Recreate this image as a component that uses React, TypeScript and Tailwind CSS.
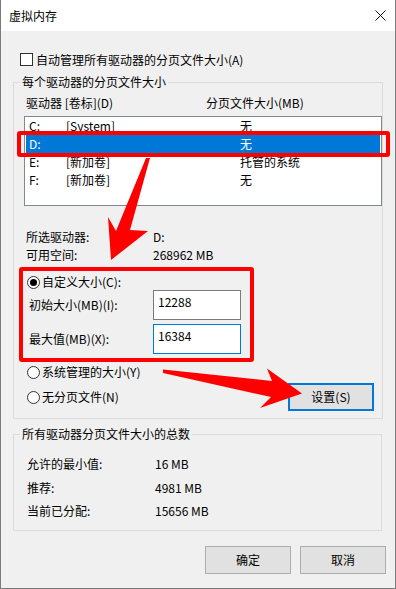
import React from 'react';

interface DriveRow {
  drive: string;
  label: string;
  size: string;
  selected?: boolean;
}

const drives: DriveRow[] = [
  { drive: 'C:', label: '[System]', size: '无' },
  { drive: 'D:', label: '', size: '无', selected: true },
  { drive: 'E:', label: '[新加卷]', size: '托管的系统' },
  { drive: 'F:', label: '[新加卷]', size: '无' },
];

const Radio = ({ checked, label }: { checked?: boolean; label: string }) => (
  <div className="flex h-[16px] items-center">
    <span className="flex h-[13px] w-[13px] items-center justify-center rounded-full border border-[#333333] bg-white">
      {checked && <span className="h-[7px] w-[7px] rounded-full bg-black" />}
    </span>
    <span className="ml-[2px]">{label}</span>
  </div>
);

const WinButton = ({ children, focused }: { children: React.ReactNode; focused?: boolean }) => (
  <button
    className={
      focused
        ? 'flex h-[28px] w-[86px] items-center justify-center border-2 border-[#0078d7] bg-[#e1e1e1]'
        : 'flex h-[28px] w-[86px] items-center justify-center border border-[#adadad] bg-[#e1e1e1]'
    }
  >
    {children}
  </button>
);

export default function App() {
  return (
    <div className="relative flex h-[589px] w-[396px] flex-col border-x border-b border-[#7a7a7a] bg-[#f0f0f0] font-['Noto_Sans_CJK_SC','Noto_Sans',sans-serif] text-[12px] leading-[16px] text-black">
      {/* title bar */}
      <div className="flex h-[31px] shrink-0 items-center justify-between bg-white pl-[8px] pr-[9px]">
        <span>虚拟内存</span>
        <svg width="11" height="11" viewBox="0 0 11 11">
          <path d="M0.5 0.5 L10.5 10.5 M10.5 0.5 L0.5 10.5" stroke="#111" strokeWidth="1" />
        </svg>
      </div>

      <div className="flex flex-1 flex-col pl-[12px] pr-[13px]">
        <div className="ml-[7px] mt-[22px] flex h-[13px] items-center">
          <span className="h-[13px] w-[13px] border border-[#333333] bg-white" />
          <span className="ml-[3px]">自动管理所有驱动器的分页文件大小(A)</span>
        </div>

        {/* per-drive group */}
        <fieldset className="mt-[8px] border border-[#dcdcdc]">
          <legend className="ml-[6px] px-[2px]">每个驱动器的分页文件大小</legend>
          <div className="flex flex-col pb-[7px] pl-[10px] pt-[5px]">
            <div className="flex h-[16px] items-center pl-[2px]">
              <span className="w-[180px]">驱动器 [卷标](D)</span>
              <span>分页文件大小(MB)</span>
            </div>

            <div className="mt-[5px] h-[90px] w-[358px] border border-[#828790] bg-white px-[1px]">
              {drives.map((d) => (
                <div
                  key={d.drive}
                  className={
                    d.selected
                      ? 'flex h-[18px] items-center bg-[#0078d7] text-white'
                      : 'flex h-[18px] items-center'
                  }
                >
                  <span className="w-[40px] pl-[3px]">{d.drive}</span>
                  <span className="w-[174px]">{d.label}</span>
                  <span>{d.size}</span>
                </div>
              ))}
            </div>

            <div className="mt-[23px] flex h-[16px] items-center pl-[2px]">
              <span className="w-[127px]">所选驱动器:</span>
              <span>D:</span>
            </div>
            <div className="mt-[2px] flex h-[16px] items-center pl-[2px]">
              <span className="w-[127px]">可用空间:</span>
              <span>268962 MB</span>
            </div>

            <div className="mt-[11px] pl-[3px]">
              <Radio checked label="自定义大小(C):" />
            </div>
            <div className="flex h-[30px] items-center pl-[5px]">
              <span className="w-[124px]">初始大小(MB)(I):</span>
              <div className="h-[30px] w-[88px] border border-[#7a7a7a] bg-white pl-[4px] pt-[3px]">12288</div>
            </div>
            <div className="mt-[4px] flex h-[30px] items-center pl-[5px]">
              <span className="w-[124px]">最大值(MB)(X):</span>
              <div className="h-[30px] w-[88px] border border-[#0078d7] bg-white pl-[4px] pt-[3px]">16384</div>
            </div>

            <div className="mt-[10px] pl-[3px]">
              <Radio label="系统管理的大小(Y)" />
            </div>
            <div className="mt-[3px] flex items-center pl-[3px]">
              <Radio label="无分页文件(N)" />
              <div className="ml-auto mr-[8px]">
                <WinButton focused>设置(S)</WinButton>
              </div>
            </div>
          </div>
        </fieldset>

        {/* totals group */}
        <fieldset className="mt-[7px] border border-[#dcdcdc]">
          <legend className="ml-[6px] px-[2px]">所有驱动器分页文件大小的总数</legend>
          <div className="flex flex-col pb-[11px] pl-[13px] pt-[14px]">
            <div className="flex h-[16px] items-center">
              <span className="w-[128px]">允许的最小值:</span>
              <span>16 MB</span>
            </div>
            <div className="mt-[8px] flex h-[16px] items-center">
              <span className="w-[128px]">推荐:</span>
              <span>4981 MB</span>
            </div>
            <div className="mt-[7px] flex h-[16px] items-center">
              <span className="w-[128px]">当前已分配:</span>
              <span>15656 MB</span>
            </div>
          </div>
        </fieldset>

        <div className="-mr-[4px] mt-[15px] flex justify-end gap-[9px]">
          <WinButton>确定</WinButton>
          <WinButton>取消</WinButton>
        </div>
      </div>

      {/* annotations */}
      <div className="pointer-events-none absolute left-[16px] top-[131px] h-[26px] w-[373px] rounded-[3px] border-4 border-[#ff0000]" />
      <div className="pointer-events-none absolute left-[18px] top-[267px] h-[95px] w-[235px] rounded-[3px] border-4 border-[#ff0000]" />
      <svg
        className="pointer-events-none absolute left-0 top-0"
        width="394"
        height="589"
        viewBox="1 0 394 589"
      >
        <polygon
          points="150,158 130,230 148,231 111,260 108,217 116,231 146,158"
          fill="#ff0000"
        />
        <polygon
          points="163,369.5 272,381 267,368.5 302,393.5 260,408 271,397 163,373"
          fill="#ff0000"
        />
      </svg>
    </div>
  );
}
